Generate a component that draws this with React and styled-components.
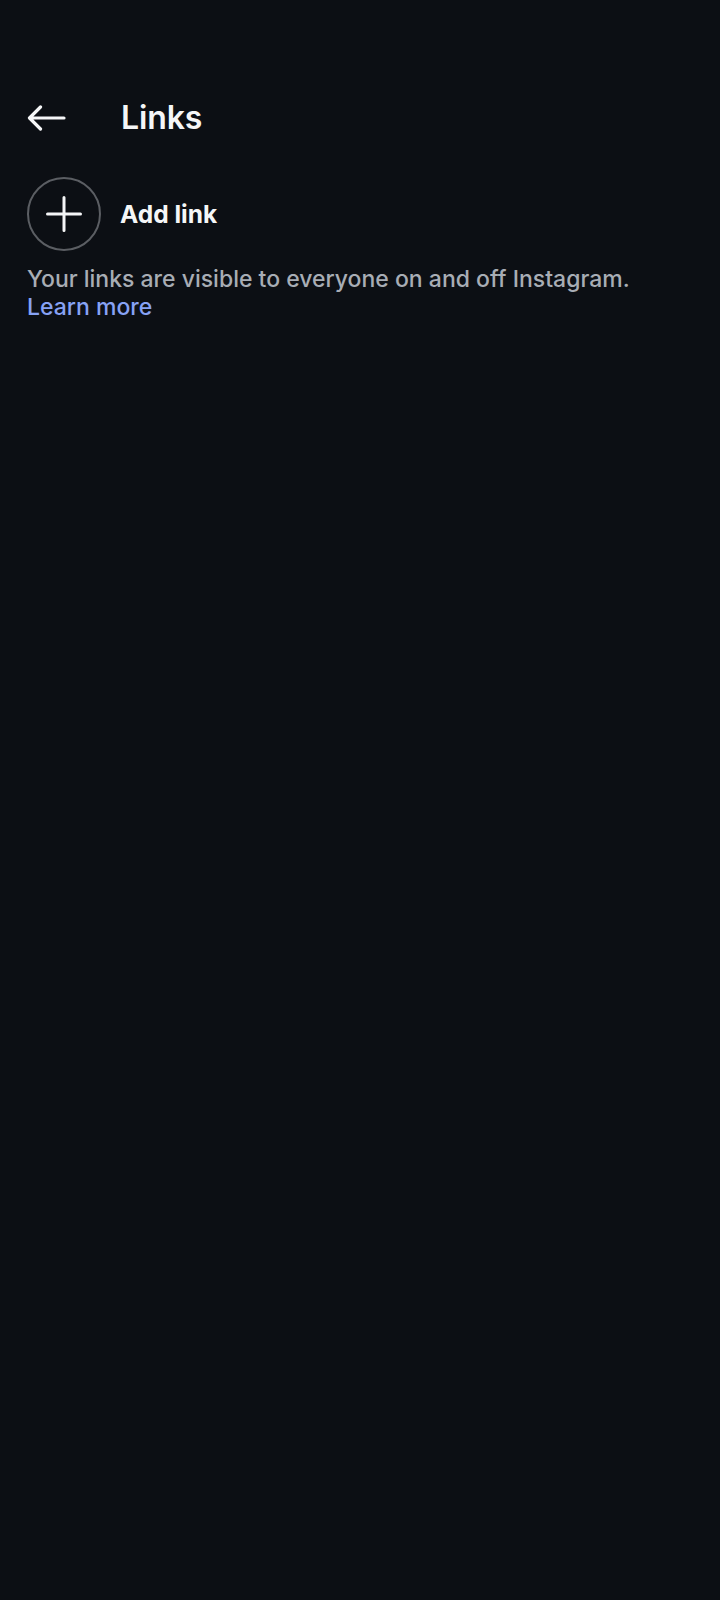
import React from "react";
import styled, { createGlobalStyle } from "styled-components";

const GlobalStyle = createGlobalStyle`
  html, body {
    margin: 0;
    padding: 0;
    background: #0c0f14;
  }
  body {
    font-family: Inter, "Noto Sans", "Liberation Sans", sans-serif;
    -webkit-font-smoothing: antialiased;
  }
`;

const Screen = styled.div`
  width: 720px;
  min-height: 1600px;
  background: #0c0f14;
  color: #f5f6f7;
  display: flex;
  flex-direction: column;
  padding: 99px 27px 0 27px;
  box-sizing: border-box;
`;

const Header = styled.header`
  display: flex;
  align-items: center;
  height: 38px;
  gap: 55px;
`;

const BackButton = styled.button`
  background: none;
  border: none;
  padding: 0;
  margin: 0;
  width: 39px;
  height: 38px;
  display: flex;
  align-items: center;
  color: #f5f6f7;
  cursor: pointer;
`;

const Title = styled.h1`
  margin: 0;
  font-size: 32px;
  line-height: 38px;
  font-weight: 600;
  letter-spacing: -0.1px;
  color: #f5f6f7;
`;

const AddRow = styled.div`
  display: flex;
  align-items: center;
  gap: 19px;
  margin-top: 40px;
`;

const CircleIcon = styled.div`
  width: 74px;
  height: 74px;
  border-radius: 50%;
  border: 2px solid #5b5e63;
  box-sizing: border-box;
  display: flex;
  align-items: center;
  justify-content: center;
  color: #f5f6f7;
`;

const AddLabel = styled.span`
  font-size: 24.5px;
  font-weight: 700;
  letter-spacing: 0;
  color: #f5f6f7;
`;

const Note = styled.p`
  margin: 14px 0 0 0;
  font-size: 23px;
  line-height: 28px;
  font-weight: 500;
  letter-spacing: 0;
  color: #a8adb5;
`;

const LearnMore = styled.a`
  display: block;
  color: #87a2f5;
  text-decoration: none;
  font-weight: 500;
`;

export default function App() {
  return (
    <>
      <GlobalStyle />
      <Screen>
        <Header>
          <BackButton aria-label="Back">
            <svg width="39" height="26" viewBox="0 0 39 26" fill="none">
              <path
                d="M37 13H3M13.5 2L2.5 13L13.5 24"
                stroke="currentColor"
                strokeWidth="3.2"
                strokeLinecap="round"
                strokeLinejoin="round"
              />
            </svg>
          </BackButton>
          <Title>Links</Title>
        </Header>
        <AddRow>
          <CircleIcon>
            <svg width="36" height="36" viewBox="0 0 36 36" fill="none">
              <path
                d="M18 1.5V34.5M1.5 18H34.5"
                stroke="currentColor"
                strokeWidth="3"
                strokeLinecap="round"
              />
            </svg>
          </CircleIcon>
          <AddLabel>Add link</AddLabel>
        </AddRow>
        <Note>
          Your links are visible to everyone on and off Instagram.
          <LearnMore href="#">Learn more</LearnMore>
        </Note>
      </Screen>
    </>
  );
}
